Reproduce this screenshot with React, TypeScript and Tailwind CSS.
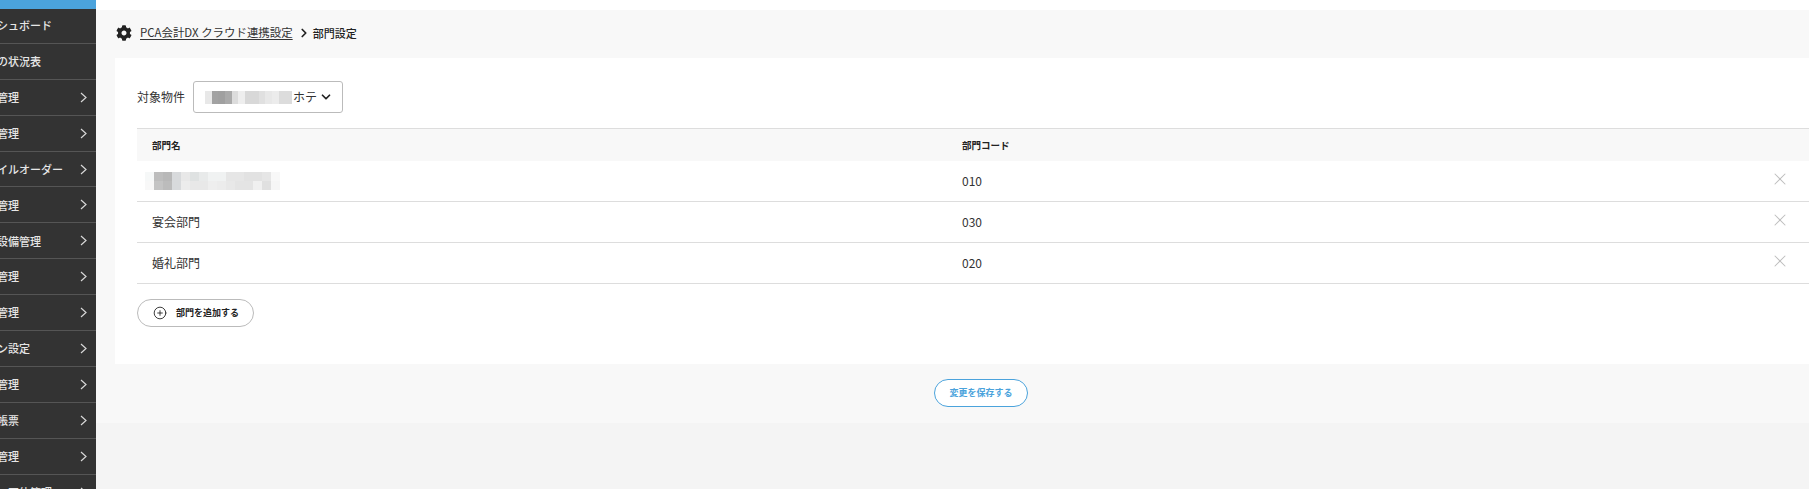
import { ChevronRight, X, CirclePlus, ChevronDown } from "lucide-react";

const font = "font-['Noto_Sans_CJK_JP','Noto_Sans',sans-serif]";

const navItems = [
  { label: "ダッシュボード", arrow: false },
  { label: "本日の状況表", arrow: false },
  { label: "予約管理", arrow: true },
  { label: "顧客管理", arrow: true },
  { label: "モバイルオーダー", arrow: true },
  { label: "売上管理", arrow: true },
  { label: "客室設備管理", arrow: true },
  { label: "料金管理", arrow: true },
  { label: "在庫管理", arrow: true },
  { label: "プラン設定", arrow: true },
  { label: "施設管理", arrow: true },
  { label: "各種帳票", arrow: true },
  { label: "権限管理", arrow: true },
  { label: "旅行・団体管理", arrow: true },
];

// mosaic cells standing in for the blurred hotel name
const selectBlur = ["#e8e8e8", "#a2a2a2", "#a0a0a0", "#aaaaaa", "#dcdcdc", "#eeeeee", "#d8d8d8", "#d8d8d8", "#e0e0e0", "#e8e8e8", "#ececec", "#dcdcdc", "#dcdcdc"];
const nameBlurTop = ["#f6f8f8", "#bdbdbd", "#b8b8b8", "#d8dadc", "#e8e8e8", "#dfe2e2", "#e8eaea", "#f0f2f2", "#f0f2f2", "#e6e6e6", "#e6e6e6", "#e2e2e2", "#e2e2e2", "#e6e6e6", "#f8f8f8"];
const nameBlurBottom = ["#f8f8f8", "#c4c4c4", "#bcbcbc", "#d8dadc", "#ececec", "#e8e8e8", "#e8e8e8", "#eeeeee", "#ececec", "#e8e8e8", "#e4e4e4", "#e4e4e4", "#f0f0f0", "#e0e0e0", "#f6f6f6"];

const rows = [
  { name: null, code: "010" },
  { name: "宴会部門", code: "030" },
  { name: "婚礼部門", code: "020" },
];

function GearIcon() {
  return (
    <svg viewBox="0 0 512 512" className="w-[16px] h-[16px] shrink-0 fill-[#222222]">
      <path d="M487.4 315.7l-42.6-24.6c4.3-23.2 4.3-47 0-70.2l42.6-24.6c4.9-2.8 7.1-8.6 5.5-14-11.1-35.6-30-67.8-54.7-94.6-3.8-4.1-10-5.1-14.8-2.3L380.8 110c-17.9-15.4-38.5-27.3-60.8-35.1V25.8c0-5.6-3.9-10.5-9.4-11.7-36.7-8.2-74.3-7.8-109.2 0-5.5 1.2-9.4 6.1-9.4 11.7V75c-22.2 7.9-42.8 19.8-60.8 35.1L88.7 85.5c-4.9-2.8-11-1.9-14.8 2.3-24.7 26.7-43.6 58.9-54.7 94.6-1.7 5.4.6 11.2 5.5 14L67.3 221c-4.3 23.2-4.3 47 0 70.2l-42.6 24.6c-4.9 2.8-7.1 8.6-5.5 14 11.1 35.6 30 67.8 54.7 94.6 3.8 4.1 10 5.1 14.8 2.3l42.6-24.6c17.9 15.4 38.5 27.3 60.8 35.1v49.2c0 5.6 3.9 10.5 9.4 11.7 36.7 8.2 74.3 7.8 109.2 0 5.5-1.2 9.4-6.1 9.4-11.7v-49.2c22.2-7.9 42.8-19.8 60.8-35.1l42.6 24.6c4.9 2.8 11 1.9 14.8-2.3 24.7-26.7 43.6-58.9 54.7-94.6 1.5-5.5-.7-11.3-5.6-14.1zM256 336c-44.1 0-80-35.9-80-80s35.9-80 80-80 80 35.9 80 80-35.9 80-80 80z" />
    </svg>
  );
}

function NavArrow() {
  return (
    <svg viewBox="0 0 7 11" className="w-[7px] h-[11px] shrink-0 fill-none stroke-[#d8d8d8] stroke-[1.2]">
      <path d="M1 1l5 4.5L1 10" />
    </svg>
  );
}

function Sidebar() {
  return (
    <aside className="w-[96px] shrink-0 h-[489px] overflow-hidden bg-[#333333]">
      <div className="h-[9px] bg-[#4ba3dc]" />
      <div className="-mt-[1px]">
        {navItems.map((item) => (
          <div
            key={item.label}
            className="h-[35.9px] flex items-center justify-between border-b border-[#555555] pr-[9px] overflow-hidden"
          >
            <span className="-ml-[25px] whitespace-nowrap text-[11px] font-medium text-[#e6e6e6]">{item.label}</span>
            {item.arrow && <NavArrow />}
          </div>
        ))}
      </div>
    </aside>
  );
}

export default function App() {
  return (
    <div className={`${font} flex h-[489px] w-[1809px] overflow-hidden bg-[#f4f4f4] text-[#222222]`}>
      <Sidebar />
      <main className="flex-1 min-w-0">
        <div className="h-[10px] bg-white" />
        <div className="h-[413px] bg-[#f8f8f8] pl-[19px]">
          <div className="h-[48px] flex items-center gap-[8px] pl-[1px] pb-[2px]">
            <GearIcon />
            <a className="text-[11.45px] underline underline-offset-2 text-[#333333]">PCA会計DX クラウド連携設定</a>
            <ChevronRight className="w-[14px] h-[14px] -ml-[4px] -mr-[6px] text-[#222222]" strokeWidth={3} />
            <span className="text-[11px] font-medium">部門設定</span>
          </div>
          <section className="h-[306px] bg-white pl-[22px] pt-[23px]">
            <div className="flex items-center gap-[8px] h-[32px]">
              <span className="text-[12px] text-[#333333]">対象物件</span>
              <div className="w-[150px] h-[32px] flex items-center pl-[11px] border border-[#bbbbbb] rounded-[3px] bg-white">
                <div className="flex h-[13px]">
                  {selectBlur.map((color, i) => (
                    <div key={i} className="w-[6.7px] h-full" style={{ backgroundColor: color }} />
                  ))}
                </div>
                <span className="ml-[1px] text-[12px] text-[#333333]">ホテ</span>
                <ChevronDown className="ml-[2px] w-[14px] h-[14px] text-[#222222]" strokeWidth={3} />
              </div>
            </div>
            <div className="mt-[15px] border-t border-[#dddddd]">
              <div className="h-[32px] flex items-center bg-[#f8f8f8] pl-[15px]">
                <span className="w-[810px] text-[9.5px] font-bold">部門名</span>
                <span className="text-[9.5px] font-bold">部門コード</span>
              </div>
              {rows.map((row) => (
                <div key={row.code} className="h-[41px] flex items-center border-b border-[#dddddd] pl-[15px] text-[12px] text-[#333333]">
                  <div className="w-[810px]">
                    {row.name ?? (
                      <div className="-ml-[7px]">
                        <div className="flex h-[9px]">
                          {nameBlurTop.map((color, i) => (
                            <div key={i} className="w-[9px] h-full" style={{ backgroundColor: color }} />
                          ))}
                        </div>
                        <div className="flex h-[9px]">
                          {nameBlurBottom.map((color, i) => (
                            <div key={i} className="w-[9px] h-full" style={{ backgroundColor: color }} />
                          ))}
                        </div>
                      </div>
                    )}
                  </div>
                  <span className="flex-1">{row.code}</span>
                  <X className="mr-[19px] -mt-[4px] w-[20px] h-[20px] text-[#bdbdbd]" strokeWidth={1.25} />
                </div>
              ))}
            </div>
            <button className="mt-[15px] w-[117px] h-[28px] flex items-center pl-[15px] gap-[9px] rounded-full border border-[#bbbbbb] bg-white">
              <CirclePlus className="w-[14px] h-[14px] text-[#222222]" strokeWidth={1.5} />
              <span className="text-[9px] font-bold">部門を追加する</span>
            </button>
          </section>
          <div className="flex justify-center pt-[15px] pl-[38px]">
            <button className="w-[94px] h-[28px] rounded-full border border-[#4ba3dc] bg-white text-[9px] font-bold text-[#4ba3dc]">
              変更を保存する
            </button>
          </div>
        </div>
      </main>
    </div>
  );
}
